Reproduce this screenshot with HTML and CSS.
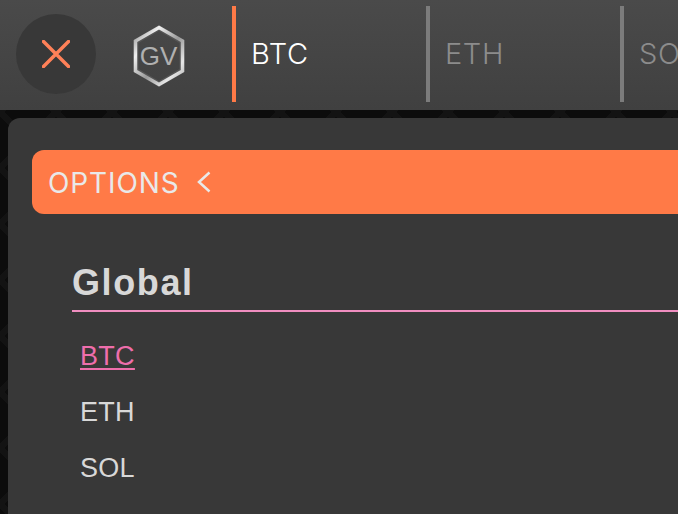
FILE: index.html
```html
<!DOCTYPE html>
<html lang="en">
<head>
<meta charset="utf-8">
<title>Options</title>
<link rel="stylesheet" href="styles.css">
</head>
<body>
<header class="topbar">
  <button class="close" aria-label="Close">
    <svg class="close-icon" viewBox="0 0 28 28" width="28" height="28"><path d="M1.500 1.500 L26.500 26.500 M26.500 1.500 L1.500 26.500"/></svg>
  </button>
  <div class="logo">
    <svg viewBox="0 0 52 62" width="52" height="62">
      <defs>
        <linearGradient id="metal" x1="0" y1="0" x2="1" y2="1">
          <stop offset="0" stop-color="#8e8e8e"/>
          <stop offset="0.25" stop-color="#f0f0f0"/>
          <stop offset="0.55" stop-color="#9a9a9a"/>
          <stop offset="0.8" stop-color="#e6e6e6"/>
          <stop offset="1" stop-color="#b0b0b0"/>
        </linearGradient>
      </defs>
      <polygon class="hex-shadow" points="26,3 49,16.500 49,45.500 26,59 3,45.500 3,16.500"/>
      <polygon class="hex" points="26,2.500 49.500,16 49.500,46 26,59.500 2.500,46 2.500,16"/>
      <text class="logo-text" x="25.500" y="39.500" text-anchor="middle">GV</text>
    </svg>
  </div>
  <nav class="tabs">
    <a class="tab tab-active">BTC</a>
    <a class="tab">ETH</a>
    <a class="tab">SOL</a>
  </nav>
</header>
<main class="panel">
  <div class="options-bar">
    <span class="options-label">OPTIONS</span>
    <svg class="chevron" viewBox="0 0 14 22" width="14" height="22"><path d="M12.500 1.500 L2 11 L12.500 20.500"/></svg>
  </div>
  <section class="group">
    <h2 class="group-title">Global</h2>
    <ul class="list">
      <li><a class="link link-active">BTC</a></li>
      <li><a class="link">ETH</a></li>
      <li><a class="link">SOL</a></li>
    </ul>
  </section>
</main>
</body>
</html>
```
FILE: styles.css
```css
* { box-sizing: border-box; }
html, body { margin: 0; height: 100%; }
body {
  width: 678px;
  height: 514px;
  overflow: hidden;
  display: flex;
  flex-direction: column;
  font-family: "Liberation Sans", Arial, sans-serif;
  background-color: #0c0c0c;
  background-image:
    linear-gradient(135deg, transparent 46%, #131313 46%, #131313 54%, transparent 54%),
    linear-gradient(45deg, transparent 46%, #131313 46%, #131313 54%, transparent 54%);
  background-size: 56px 56px;
}
.topbar {
  flex: none;
  height: 110px;
  display: flex;
  align-items: center;
  background: linear-gradient(#4a4a4a, #404040);
  overflow: hidden;
}
.close {
  flex: none;
  width: 80px;
  height: 80px;
  margin-left: 16px;
  margin-top: -2px;
  padding: 0;
  border: 0;
  border-radius: 50%;
  background: #383838;
  display: flex;
  align-items: center;
  justify-content: center;
}
.close-icon path {
  fill: none;
  stroke: #ff8158;
  stroke-width: 3.500;
  stroke-linecap: round;
}
.logo {
  flex: none;
  width: 52px;
  height: 62px;
  margin-left: 37px;
  margin-top: 2px;
}
.hex { fill: none; stroke: url(#metal); stroke-width: 3.500; stroke-linejoin: miter; }
.hex-shadow { fill: none; stroke: #555; stroke-width: 5; }
.logo-text {
  font-family: "Liberation Sans", Arial, sans-serif;
  font-size: 26px;
  fill: #b0b0b0;
}
.tabs {
  flex: none;
  display: flex;
  height: 96px;
  margin-left: 47px;
  margin-top: -2px;
}
.tab {
  flex: none;
  width: 194px;
  height: 96px;
  border-left: 4px solid #7c7c7c;
  padding: 0 0 2px 15px;
  display: flex;
  align-items: center;
  font-family: Inter, sans-serif;
  font-weight: 300;
  font-size: 29px;
  letter-spacing: 0.600px;
  color: #8c8c8c;
}
.tab-active { border-left-color: #ff7a47; color: #fff; }
.panel {
  flex: 1;
  margin: 8px 0 0 8px;
  padding: 32px 0 0 24px;
  background: #383838;
  border-radius: 12px 0 0 0;
}
.options-bar {
  height: 64px;
  display: flex;
  align-items: center;
  gap: 17px;
  padding-left: 16px;
  background: #ff7a47;
  border-radius: 12px 0 0 12px;
  color: #e9e9e9;
  font-family: Inter, sans-serif;
  font-size: 28px;
  letter-spacing: 0.900px;
}
.options-label { padding-top: 2px; }
.chevron { margin-top: -1px; }
.chevron path { fill: none; stroke: #e9e9e9; stroke-width: 2.500; }
.group { margin: 48px 0 0 40px; }
.group-title {
  margin: 0;
  height: 50px;
  border-bottom: 2px solid #f08ec0;
  font-size: 36px;
  line-height: 42px;
  font-weight: 700;
  letter-spacing: 1.600px;
  color: #d8d8d8;
}
.list { list-style: none; margin: 16px 0 0; padding: 0 0 0 8px; }
.list li { height: 56px; font-size: 27px; letter-spacing: 0.300px; line-height: 56px; color: #d8d8d8; }
.link-active { color: #ee6eac; text-decoration: underline; text-underline-offset: 3px; }
```
